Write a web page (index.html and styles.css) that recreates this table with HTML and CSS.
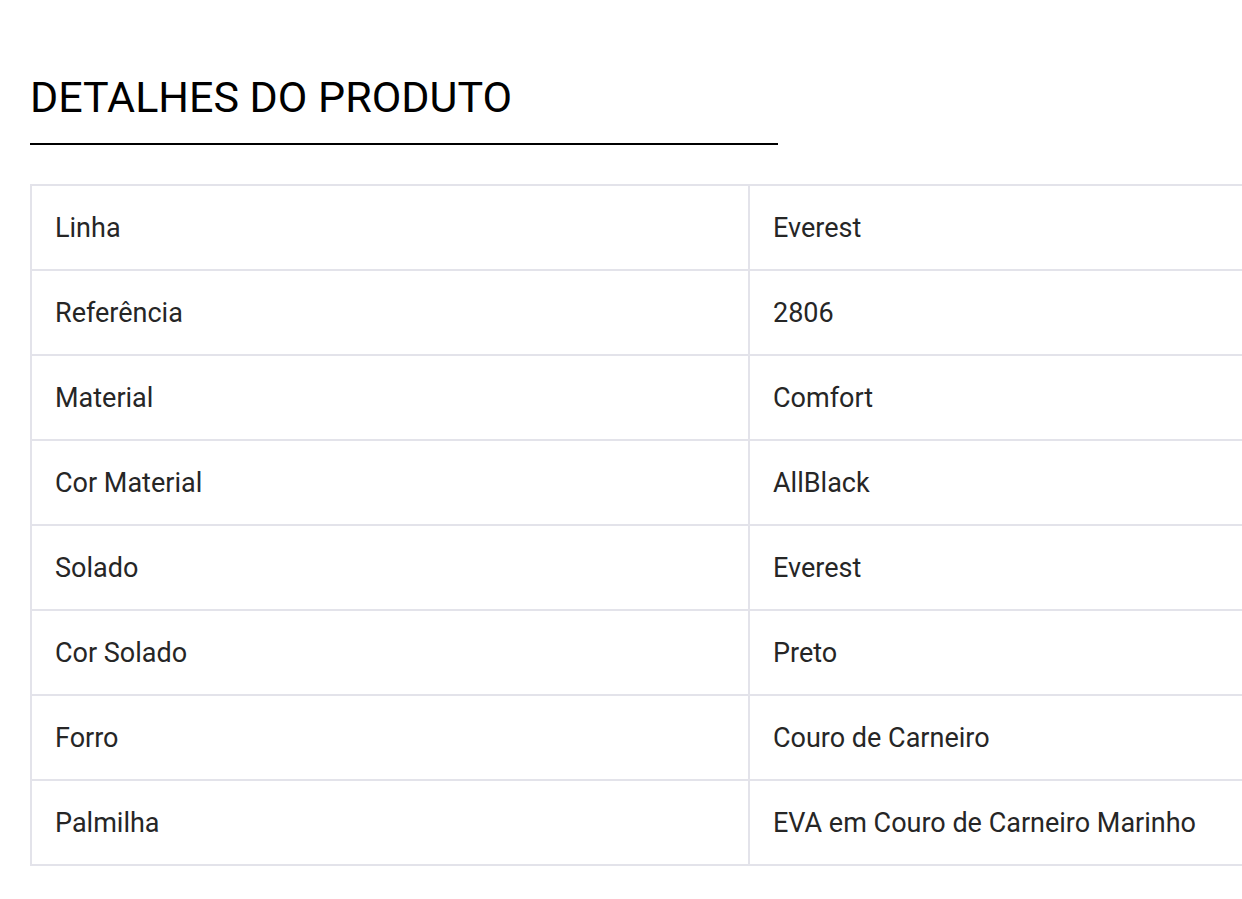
FILE: index.html
```html
<!DOCTYPE html>
<html lang="pt">
<head>
<meta charset="utf-8">
<title>Detalhes do produto</title>
<link rel="stylesheet" href="styles.css">
</head>
<body>
<section class="details">
  <h2 class="details-title">DETALHES DO PRODUTO</h2>
  <table class="details-table">
    <tbody>
      <tr><td>Linha</td><td>Everest</td></tr>
      <tr><td>Referência</td><td>2806</td></tr>
      <tr><td>Material</td><td>Comfort</td></tr>
      <tr><td>Cor Material</td><td>AllBlack</td></tr>
      <tr><td>Solado</td><td>Everest</td></tr>
      <tr><td>Cor Solado</td><td>Preto</td></tr>
      <tr><td>Forro</td><td>Couro de Carneiro</td></tr>
      <tr><td>Palmilha</td><td>EVA em Couro de Carneiro Marinho</td></tr>
    </tbody>
  </table>
</section>
</body>
</html>
```

FILE: styles.css
```css
html, body {
  margin: 0;
  padding: 0;
  background: #ffffff;
  overflow: hidden;
}

body {
  font-family: Roboto, "Liberation Sans", sans-serif;
  color: #222222;
}

.details {
  padding: 72px 0 0 30px;
  width: 1500px;
}

.details-title {
  margin: 0;
  width: 748px;
  font-size: 43px;
  font-weight: 400;
  line-height: 50px;
  color: #000000;
  padding-bottom: 21px;
  border-bottom: 2px solid #000000;
}

.details-table {
  margin-top: 39px;
  width: 1438px;
  border-collapse: collapse;
  table-layout: fixed;
}

.details-table td {
  border: 2px solid #e3e3ea;
  height: 85px;
  padding: 0 23px;
  box-sizing: border-box;
  font-size: 27px;
  color: #262626;
  vertical-align: middle;
}
```
